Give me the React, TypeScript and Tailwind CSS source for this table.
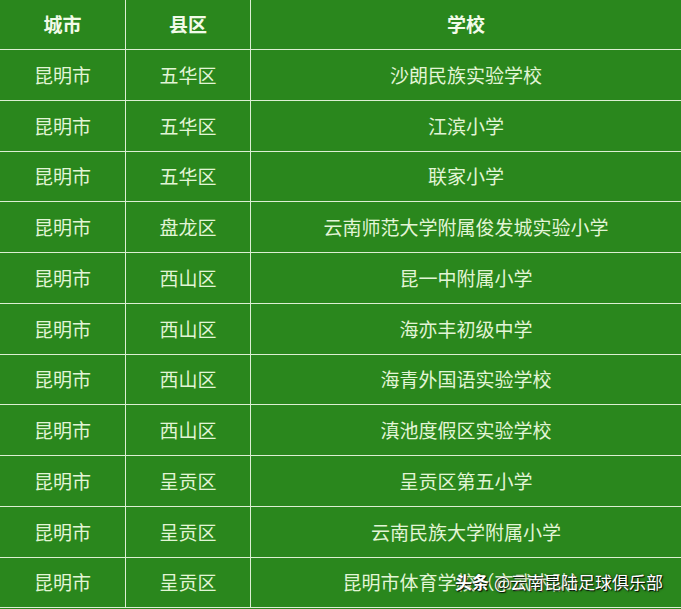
const rows: [string, string, string][] = [
  ["昆明市", "五华区", "沙朗民族实验学校"],
  ["昆明市", "五华区", "江滨小学"],
  ["昆明市", "五华区", "联家小学"],
  ["昆明市", "盘龙区", "云南师范大学附属俊发城实验小学"],
  ["昆明市", "西山区", "昆一中附属小学"],
  ["昆明市", "西山区", "海亦丰初级中学"],
  ["昆明市", "西山区", "海青外国语实验学校"],
  ["昆明市", "西山区", "滇池度假区实验学校"],
  ["昆明市", "呈贡区", "呈贡区第五小学"],
  ["昆明市", "呈贡区", "云南民族大学附属小学"],
  ["昆明市", "呈贡区", "昆明市体育学校（市武术队）"],
];

// row content heights so the white rules land where the screenshot has them
const heights = [
  "h-[50px]",
  "h-[50px]",
  "h-[49px]",
  "h-[50px]",
  "h-[50px]",
  "h-[50px]",
  "h-[49px]",
  "h-[50px]",
  "h-[50px]",
  "h-[50px]",
  "h-[49px]",
];

const font = {
  fontFamily: "'Noto Sans CJK SC', 'Noto Sans', sans-serif",
};

function Row({ cells, h, head }: { cells: string[]; h: string; head?: boolean }) {
  return (
    <div className="grid grid-cols-[126px_125px_1fr] border-b border-[#dcefd2]">
      {cells.map((c, i) => (
        <div
          key={i}
          className={`${h} flex items-center justify-center whitespace-nowrap ${
            i < 2 ? "border-r border-[#dcefd2]" : ""
          } ${head ? "font-bold text-[#f2fbe9]" : "text-[#e2f5d6]"} text-[19px]`}
        >
          {c}
        </div>
      ))}
    </div>
  );
}

export default function App() {
  return (
    <div className="relative w-[681px] h-[609px] overflow-hidden bg-[#2a871d]" style={font}>
      <Row cells={["城市", "县区", "学校"]} h="h-[49px]" head />
      {rows.map((r, i) => (
        <Row key={i} cells={r} h={heights[i]} />
      ))}
      <div className="absolute left-[455px] top-[570px] flex items-center gap-[5px] text-[17px] leading-[24px] text-white [text-shadow:1px_1px_1px_rgba(0,0,0,0.9),0_0_3px_rgba(0,0,0,0.6)]">
        <span className="font-bold">头条</span>
        <span>@云南昆陆足球俱乐部</span>
      </div>
    </div>
  );
}
